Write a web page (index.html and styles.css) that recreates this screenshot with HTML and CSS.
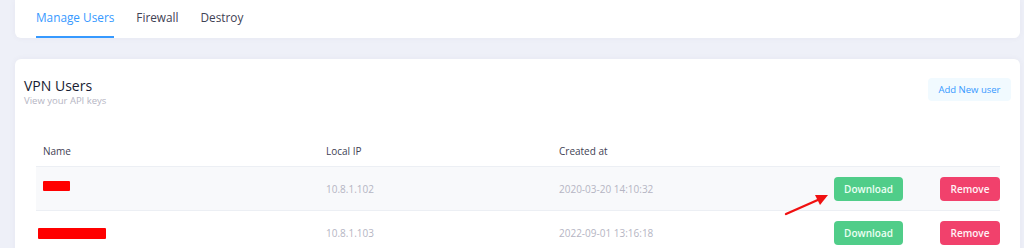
FILE: index.html
```html
<!DOCTYPE html>
<html lang="en">
<head>
<meta charset="UTF-8">
<title>VPN Users</title>
<link rel="stylesheet" href="styles.css">
</head>
<body>
<div class="page">
  <div class="card nav-card">
    <div class="tabs">
      <a class="tab active">Manage Users</a>
      <a class="tab">Firewall</a>
      <a class="tab">Destroy</a>
    </div>
  </div>

  <div class="card users-card">
    <div class="card-head">
      <div>
        <h3 class="card-title">VPN Users</h3>
        <div class="card-sub">View your API keys</div>
      </div>
      <button class="btn btn-light">Add New user</button>
    </div>

    <table class="users">
      <colgroup>
        <col style="width:283px">
        <col style="width:233px">
        <col style="width:275px">
        <col style="width:173px">
      </colgroup>
      <thead>
        <tr><th>Name</th><th>Local IP</th><th>Created at</th><th></th></tr>
      </thead>
      <tbody>
        <tr class="striped">
          <td><span class="redact short"></span></td>
          <td>10.8.1.102</td>
          <td>2020-03-20 14:10:32</td>
          <td class="actions"><button class="btn btn-green">Download</button><button class="btn btn-red">Remove</button></td>
        </tr>
        <tr>
          <td><span class="redact long"></span></td>
          <td>10.8.1.103</td>
          <td>2022-09-01 13:16:18</td>
          <td class="actions"><button class="btn btn-green">Download</button><button class="btn btn-red">Remove</button></td>
        </tr>
      </tbody>
    </table>
  </div>
</div>

<!-- annotation arrow drawn over the screenshot -->
<svg class="arrow" width="60" height="30" viewBox="0 0 60 30">
  <line x1="2" y1="24" x2="36" y2="9" stroke="#f01010" stroke-width="2.4" stroke-linecap="round"/>
  <polygon points="44,5 31,5 36,15" fill="#f01010"/>
</svg>
</body>
</html>
```

FILE: styles.css
```css
body {
  margin: 0;
  background: #eef0f8;
  font-family: "Open Sans", "Liberation Sans", sans-serif;
  color: #3f4254;
  overflow: hidden;
}
.page {
  padding: 0 4px 0 15px;
}
.card {
  background: #fff;
  border-radius: 6px;
  box-shadow: 0 0 6px rgba(82, 63, 105, 0.05);
}
.nav-card {
  height: 38px;
  border-radius: 0 0 6px 6px;
}
.tabs {
  display: flex;
  gap: 22px;
  padding-left: 21px;
}
.tab {
  height: 38px;
  box-sizing: border-box;
  line-height: 34px;
  font-size: 11.8px;
  color: #3f4254;
  border-bottom: 2px solid transparent;
}
.tab.active {
  color: #3699ff;
  border-bottom-color: #3699ff;
}

.users-card {
  margin-top: 21px;
  height: 200px;
  border-radius: 6px 6px 0 0;
}
.card-head {
  display: flex;
  justify-content: space-between;
  align-items: flex-start;
  padding: 19px 9px 0 9px;
  height: 58px;
}
.card-title {
  margin: 0;
  font-size: 14px;
  font-weight: 500;
  line-height: 16px;
  color: #181c32;
}
.card-sub {
  margin-top: 1px;
  font-size: 9.5px;
  line-height: 12px;
  color: #b5b5c3;
}
.btn {
  border: none;
  border-radius: 4px;
  font-family: inherit;
  font-size: 10px;
  font-weight: 600;
  cursor: pointer;
  padding: 0;
}
.btn-light {
  width: 83px;
  height: 23px;
  font-size: 9.5px;
  font-weight: 500;
  background: #f1faff;
  color: #3699ff;
}

.users {
  margin-left: 21px;
  border-collapse: collapse;
  table-layout: fixed;
  width: 964px;
}
.users th {
  text-align: left;
  font-size: 10px;
  font-weight: 500;
  color: #3f4254;
  height: 30px;
  padding: 0 7px;
  border-bottom: 1px solid #eceff4;
}
.users td {
  height: 43px;
  padding: 0 7px;
  font-size: 10px;
  color: #b5b5c3;
  border-bottom: 1px solid #eceff4;
}
.users tr.striped td {
  background: #f8f9fb;
}
.users td.actions {
  padding: 0;
  white-space: nowrap;
}
.btn-green {
  width: 69px;
  height: 24px;
  margin-left: 7px;
  background: #50cd89;
  color: #ecfff4;
}
.btn-red {
  width: 60px;
  height: 24px;
  margin-left: 37px;
  background: #f1416c;
  color: #fff3f6;
}
.redact {
  display: inline-block;
  background: #ff0000;
  border-radius: 1px;
  vertical-align: middle;
}
.redact.short {
  width: 27px;
  height: 10px;
  margin-bottom: 5px;
}
.redact.long {
  width: 68px;
  height: 11px;
  margin-left: -5px;
}
.arrow {
  position: absolute;
  left: 784px;
  top: 190px;
}
```
